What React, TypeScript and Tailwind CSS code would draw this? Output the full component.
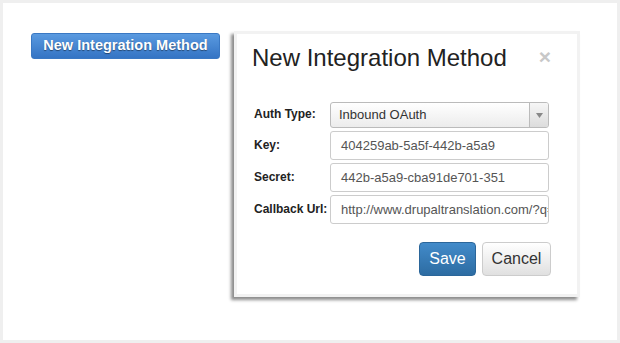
import React from "react";

const font = { fontFamily: '"Liberation Sans", Arial, sans-serif' };

function Field({ label, value }: { label: string; value: string }) {
  return (
    <div className="flex items-center">
      <div className="w-[76px] text-[12px] font-bold text-[#222] whitespace-nowrap -mt-[2px]">{label}</div>
      <div className="w-[219px] h-[29px] border border-[#ccc] rounded-[3px] bg-white flex items-center pl-[10px] overflow-hidden whitespace-nowrap text-[13px] text-[#555]">
        {value}
      </div>
    </div>
  );
}

export default function App() {
  return (
    <div className="w-[620px] h-[343px] bg-[#efefef] p-[3px]" style={font}>
      <div className="w-full h-full bg-white flex items-start">
        <button className="ml-[28px] mt-[30px] w-[189px] h-[26px] rounded-[3px] border border-[#3a78c3] bg-gradient-to-b from-[#5a9ae0] to-[#3474c4] text-white font-bold text-[14.5px] [text-shadow:0_1px_1px_rgba(0,0,0,0.45)]">
          New Integration Method
        </button>
        <div className="ml-[14px] mt-[28px] w-[346px] h-[266px] border-[3px] border-[#f2f2f2] bg-white shadow-[-3px_3px_3px_rgba(0,0,0,0.45)] flex flex-col">
          <div className="flex items-start justify-between pl-[15px] pr-[26px] pt-[9px]">
            <div className="text-[24px] leading-[30px] text-[#222]">New Integration Method</div>
            <div className="text-[21px] font-bold text-[#c8c8c8] leading-[20px] mt-[4px]">×</div>
          </div>
          <div className="pl-[17px] mt-[29px] flex flex-col gap-[3px]">
            <div className="flex items-center">
              <div className="w-[76px] text-[12px] font-bold text-[#222] -mt-[2px]">Auth Type:</div>
              <div className="w-[219px] h-[26px] border border-[#bbb] rounded-[3px] bg-gradient-to-b from-white to-[#ececec] flex items-center overflow-hidden">
                <div className="flex-1 pl-[8px] text-[13px] text-[#333]">Inbound OAuth</div>
                <div className="w-[19px] h-full border-l border-[#bbb] bg-gradient-to-b from-[#f6f6f6] to-[#dcdcdc] flex items-center justify-center">
                  <svg width="7" height="5" viewBox="0 0 7 5"><path d="M0 0H7L3.5 5Z" fill="#888" /></svg>
                </div>
              </div>
            </div>
            <Field label="Key:" value="404259ab-5a5f-442b-a5a9" />
            <Field label="Secret:" value="442b-a5a9-cba91de701-351" />
            <Field label="Callback Url:" value="http://www.drupaltranslation.com/?q=" />
          </div>
          <div className="flex justify-end gap-[6px] pr-[26px] mt-[18px]">
            <button className="w-[57px] h-[34px] rounded-[4px] border border-[#2b669a] bg-gradient-to-b from-[#428bca] to-[#2d6ca2] text-white text-[16px]">
              Save
            </button>
            <button className="w-[69px] h-[34px] rounded-[4px] border border-[#ccc] bg-gradient-to-b from-white to-[#e0e0e0] text-[#333] text-[16px]">
              Cancel
            </button>
          </div>
        </div>
      </div>
    </div>
  );
}
